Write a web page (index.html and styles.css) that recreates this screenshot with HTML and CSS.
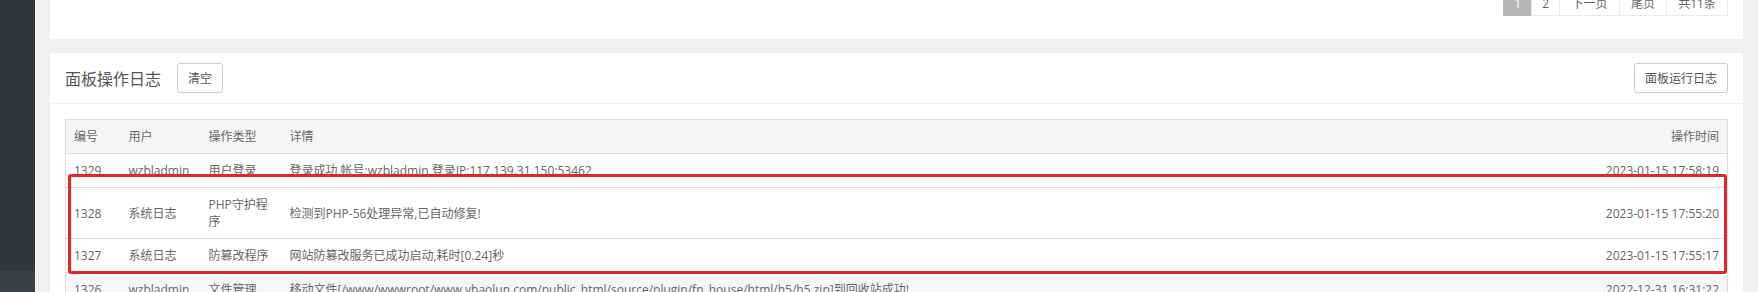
FILE: index.html
```html
<!DOCTYPE html>
<html lang="zh-CN">
<head>
<meta charset="utf-8">
<title>面板操作日志</title>
<link rel="stylesheet" href="styles.css">
</head>
<body>
<div class="layout">
  <aside class="sidebar">
    <div class="menu-item"></div>
  </aside>
  <main class="main">
    <section class="card card-top">
      <div class="pager">
        <span class="pg pg-active">1</span>
        <a class="pg">2</a>
        <a class="pg pg-wide">下一页</a>
        <a class="pg pg-mid">尾页</a>
        <span class="pg pg-total">共11条</span>
      </div>
    </section>
    <section class="card card-log">
      <header class="card-head">
        <div class="head-left">
          <h2 class="title">面板操作日志</h2>
          <button class="btn">清空</button>
        </div>
        <button class="btn">面板运行日志</button>
      </header>
      <div class="card-body">
        <div class="table-wrap">
          <table class="log-table">
            <colgroup>
              <col class="c-id"><col class="c-user"><col class="c-type"><col><col class="c-time">
            </colgroup>
            <thead>
              <tr><th>编号</th><th>用户</th><th>操作类型</th><th>详情</th><th class="r">操作时间</th></tr>
            </thead>
            <tbody>
              <tr><td>1329</td><td>wzbladmin</td><td>用户登录</td><td>登录成功,帐号:wzbladmin,登录IP:117.139.31.150:53462</td><td class="r">2023-01-15 17:58:19</td></tr>
              <tr><td>1328</td><td>系统日志</td><td class="nowrap">PHP守护程<br>序</td><td>检测到PHP-56处理异常,已自动修复!</td><td class="r">2023-01-15 17:55:20</td></tr>
              <tr><td>1327</td><td>系统日志</td><td>防篡改程序</td><td>网站防篡改服务已成功启动,耗时[0.24]秒</td><td class="r">2023-01-15 17:55:17</td></tr>
              <tr class="hover"><td>1326</td><td>wzbladmin</td><td>文件管理</td><td>移动文件[/www/wwwroot/www.ybaolun.com/public_html/source/plugin/fn_house/html/h5/h5.zip]到回收站成功!</td><td class="r">2022-12-31 16:31:22</td></tr>
            </tbody>
          </table>
          <div class="mark"></div>
        </div>
      </div>
    </section>
  </main>
</div>
</body>
</html>
```

FILE: styles.css
```css
* { box-sizing: border-box; }
html, body { margin: 0; padding: 0; }
body {
  background: #f0f0f0;
  font-family: "Open Sans", "Noto Sans CJK SC", sans-serif;
  font-size: 12px;
  color: #666;
  overflow: hidden;
}
.layout {
  display: flex;
  height: 292px;
  overflow: hidden;
}
.sidebar {
  width: 35px;
  flex: 0 0 35px;
  background: #30373e;
  display: flex;
  flex-direction: column;
}
.menu-item {
  margin-top: 271px;
  flex: 1;
  background: #3a4148;
}
.main {
  flex: 1;
  padding: 0 15px;
  margin-top: -18px;
  display: flex;
  flex-direction: column;
  gap: 14px;
}
.card { background: #fff; }
.card-top {
  padding: 10px 15px 23px;
  display: flex;
  justify-content: flex-end;
}
.pager { display: flex; }
.pg {
  height: 24px;
  line-height: 22px;
  border: 1px solid #eaeaea;
  margin-left: -1px;
  padding: 0 10px;
  color: #666;
  background: #fff;
  text-align: center;
}
.pg-active { background: #b5b5b5; border-color: #b5b5b5; color: #fff; width: 29px; padding: 0; }
.pg-wide { width: 61px; padding: 0; }
.pg-mid { width: 48px; padding: 0; }
.pg-total { width: 62px; padding: 0; }

.card-head {
  height: 51px;
  border-bottom: 1px solid #f0f0f0;
  padding: 0 15px;
  display: flex;
  align-items: center;
  justify-content: space-between;
}
.head-left { display: flex; align-items: center; gap: 16px; }
.title {
  margin: 0;
  font-size: 16px;
  font-weight: normal;
  color: #555;
}
.btn {
  height: 30px;
  padding: 0 10px;
  border: 1px solid #ccc;
  border-radius: 3px;
  background: #fff;
  font: inherit;
  font-size: 12px;
  color: #555;
}
.card-body { padding: 15px; }
.table-wrap { position: relative; }
.log-table {
  width: 100%;
  border-collapse: collapse;
  table-layout: fixed;
  border: 1px solid #ddd;
}
.c-id { width: 55px; }
.c-user { width: 80px; }
.c-type { width: 81px; }
.c-time { width: 160px; }
.log-table th, .log-table td {
  padding: 8px;
  line-height: 17px;
  text-align: left;
  font-weight: normal;
  color: #666;
  border-top: 1px solid #ddd;
  vertical-align: middle;
  white-space: nowrap;
  overflow: hidden;
}
.log-table th { background: #f6f6f6; }
.log-table .r { text-align: right; }
.log-table tr.hover td { background: #f6f7f8; }
.mark {
  position: absolute;
  left: 3px;
  right: 1px;
  top: 55px;
  height: 100px;
  border: 3px solid #e0282b;
  border-radius: 3px;
}
```
